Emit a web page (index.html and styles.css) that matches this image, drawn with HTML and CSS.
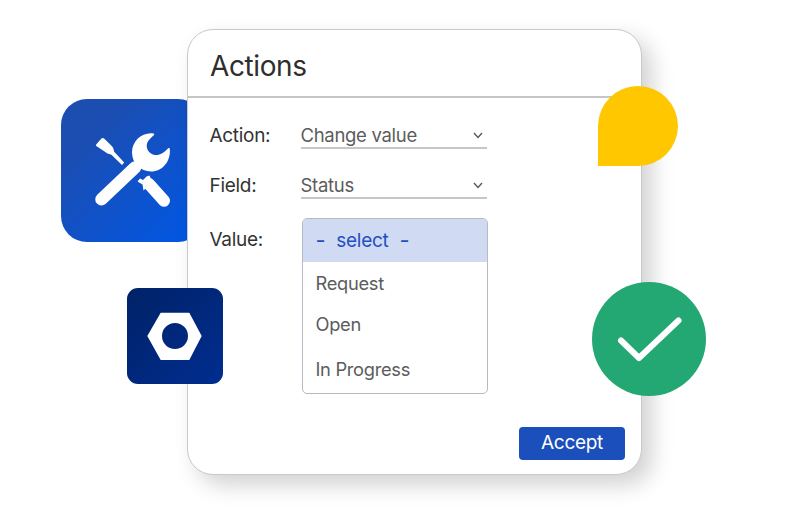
FILE: index.html
```html
<!DOCTYPE html>
<html lang="en">
<head>
<meta charset="utf-8">
<title>Actions</title>
<link rel="stylesheet" href="styles.css">
</head>
<body>
<div class="stage">
  <div class="tile-blue">
    <svg class="tile-svg" viewBox="61 99 143 143" aria-hidden="true">
      <path class="wrench-handle" d="M135 167.500L101.500 199.300"/>
      <path class="fill-white" d="M153.500 133.500C142 132 132 141 132 152.500c0 10.500 8.500 19 19 19 11.500 0 20-10.300 18.800-22.800-.1-.8-1-1-1.600-.5-3 2.800-6 6-10.500 6.800-4.300.5-8.500-1.700-10.200-5.500-1.500-3.500-.8-7 1.500-9.500 1.700-1.800 3.700-3.500 5-4.900.5-.6.300-1.400-.5-1.600Z"/>
      <path class="fill-white" d="M96.800 143.700L101.200 138.700c.8-.9 2-1 2.900-.2L112 146.300c.9 1 1.300 2.100 1.600 3.200l.6 2.200 10 10.800-2.200 2.500-10.600-10.300-2.100-.6c-1.300-.3-2.400-.9-3.300-1.700l-9.700-6.500c-.7-.6-.2-1.300.5-2.200Z"/>
      <path class="shank" d="M149 184L164 200.700"/>
      <path class="fill-white" d="M137.500 181.500L140 178.500L143 180L146.500 176.500L149.500 175.500L151 179L149 185L143.500 190.500L142.500 184.500Z"/>
    </svg>
  </div>

  <main class="card">
    <h1 class="card-title">Actions</h1>
    <div class="form">
      <div class="row">
        <span class="label">Action:</span>
        <div class="select">
          <span class="select-text">Change value</span>
          <svg class="chevron" viewBox="0 0 10 7" aria-hidden="true"><path d="M1 1l4 4.500L9 1"/></svg>
        </div>
      </div>
      <div class="row">
        <span class="label">Field:</span>
        <div class="select">
          <span class="select-text">Status</span>
          <svg class="chevron" viewBox="0 0 10 7" aria-hidden="true"><path d="M1 1l4 4.500L9 1"/></svg>
        </div>
      </div>
      <div class="row row-value">
        <span class="label">Value:</span>
        <ul class="list">
          <li class="list-selected"><span class="dash">-</span><span>select</span><span class="dash">-</span></li>
          <li class="opt-request">Request</li>
          <li class="opt-open">Open</li>
          <li class="opt-progress">In Progress</li>
        </ul>
      </div>
    </div>
    <div class="actions"><button class="accept" type="button">Accept</button></div>
  </main>

  <div class="tile-nut">
    <svg class="tile-svg" viewBox="127 288 96 96" aria-hidden="true">
      <path class="fill-white" fill-rule="evenodd" d="M147.300 336L160.700 312.700H189.300L201.700 336L189.300 360H160.700ZM188 336a13 13 0 1 0-26 0a13 13 0 1 0 26 0Z"/>
    </svg>
  </div>
  <div class="drop"></div>
  <div class="check">
    <svg class="tile-svg" viewBox="592 282 114 114" aria-hidden="true">
      <path class="check-mark" d="M621 340.500L639 358L678.500 320.500"/>
    </svg>
  </div>
</div>
</body>
</html>
```

FILE: styles.css
```css
* { box-sizing: border-box; }
html, body { margin: 0; padding: 0; background: #fff; }
body { font-family: "Inter", "Liberation Sans", sans-serif; color: #333; overflow: hidden; }

.stage { position: relative; width: 800px; height: 510px; padding: 29px 0 0 187px; }

.card {
  position: relative;
  z-index: 1;
  width: 455px;
  height: 446px;
  background: #fff;
  border: 1px solid #c9c9c9;
  border-radius: 26px;
  box-shadow: 10px 10px 22px rgba(0, 0, 0, .18);
}
.card-title {
  margin: 0;
  height: 68px;
  padding: 16px 0 0 22px;
  border-bottom: 2px solid #c6c6c6;
  font-size: 28px;
  line-height: 40px;
  font-weight: 400;
  letter-spacing: -.4px;
  color: #2e2e2e;
}

.form { padding: 22px 0 0 22px; display: flex; flex-direction: column; gap: 21px; }
.row { display: flex; align-items: flex-start; }
.label { width: 91.500px; margin-left: -.5px; padding-top: 2px; font-size: 19px; line-height: 27px; letter-spacing: -.3px; color: #333; }
.select {
  width: 186px;
  height: 29px;
  padding-top: 2px;
  padding-right: 4px;
  display: flex;
  align-items: flex-start;
  justify-content: space-between;
  border-bottom: 2px solid #c6c6c6;
  font-size: 18.500px;
  line-height: 27px;
  letter-spacing: -.3px;
  color: #5c5c5c;
}
.select-text { margin-left: -.5px; }
.chevron { width: 10px; height: 7px; margin-top: 10px; fill: none; stroke: #555; stroke-width: 1.300; }

.row-value { margin-top: -2px; }
.row-value .label { margin-top: 6px; }
.list {
  width: 186px;
  height: 176px;
  margin: 0 0 0 1px;
  padding: 0;
  list-style: none;
  border: 1px solid #b6bac4;
  border-radius: 5px;
  overflow: hidden;
  font-size: 18.300px;
  line-height: 27px;
  letter-spacing: -.3px;
  color: #5c5c5c;
}
.list li { padding-left: 12.500px; }
.list .list-selected {
  height: 43px;
  padding-top: 8px;
  display: flex;
  gap: 11px;
  background: #d0dbf3;
  color: #1f50c0;
  font-size: 19px;
}
.dash { font-size: 22px; }
.opt-request { margin-top: 8px; }
.opt-open { margin-top: 14px; }
.opt-progress { margin-top: 18px; }

.actions { position: absolute; right: 16px; bottom: 14px; }
.accept {
  display: block;
  width: 106px;
  height: 33px;
  padding: 0 0 2px;
  border: 0;
  border-radius: 4px;
  background: #1a4fbc;
  color: #fff;
  font: inherit;
  font-size: 19px;
  line-height: 29px;
  letter-spacing: -.3px;
}

.tile-svg { display: block; width: 100%; height: 100%; }
.fill-white { fill: #fff; }
.wrench-handle { fill: none; stroke: #fff; stroke-width: 12.500; stroke-linecap: round; }
.shank { fill: none; stroke: #fff; stroke-width: 12; stroke-linecap: round; }
.tile-blue {
  position: absolute;
  z-index: 0;
  left: 61px;
  top: 99px;
  width: 143px;
  height: 143px;
  border-radius: 26px;
  background: linear-gradient(135deg, #1c4db0 20%, #0058e8 100%);
}
.tile-nut {
  position: absolute;
  z-index: 2;
  left: 127px;
  top: 288px;
  width: 96px;
  height: 96px;
  border-radius: 11px;
  background: linear-gradient(135deg, #002266, #002d90);
}
.drop {
  position: absolute;
  z-index: 2;
  left: 598px;
  top: 86px;
  width: 80px;
  height: 80px;
  border-radius: 40px 40px 40px 0;
  background: #ffc700;
}
.check {
  position: absolute;
  z-index: 2;
  left: 592px;
  top: 282px;
  width: 114px;
  height: 114px;
  border-radius: 50%;
  background: #23a773;
}
.check-mark { fill: none; stroke: #fff; stroke-width: 6; stroke-linecap: round; stroke-linejoin: round; }
```
